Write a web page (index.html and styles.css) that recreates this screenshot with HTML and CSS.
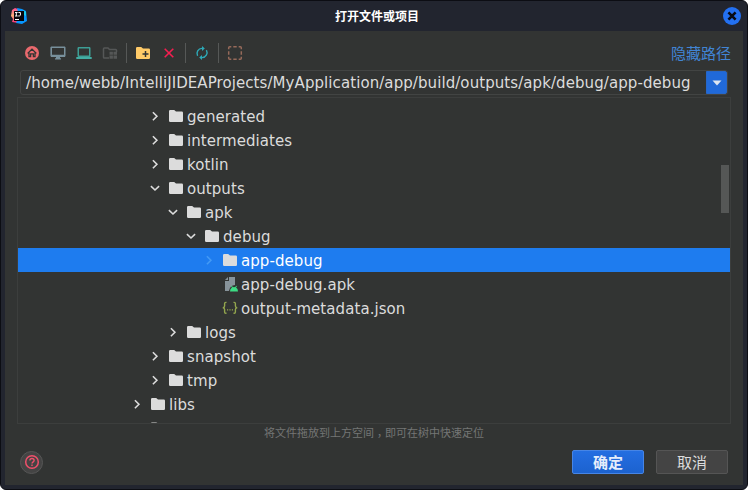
FILE: index.html
```html
<!DOCTYPE html>
<html lang="zh-CN">
<head>
<meta charset="utf-8">
<title>打开文件或项目</title>
<link rel="stylesheet" href="styles.css">
</head>
<body>
<svg class="defs" aria-hidden="true">
  <symbol id="folder" viewBox="0 0 16 16"><path d="M1 3.2Q1 2 2.2 2H6.2L8 3.5H13.8Q15 3.5 15 4.7V12.8Q15 14 13.8 14H2.2Q1 14 1 12.8Z" fill="currentColor"/></symbol>
  <symbol id="right" viewBox="0 0 16 16"><path d="M5.9 4.2L9.9 8.2L5.9 12.2" fill="none" stroke="currentColor" stroke-width="1.6"/></symbol>
  <symbol id="down" viewBox="0 0 16 16"><path d="M3.9 6.1L8 10L12.1 6.1" fill="none" stroke="currentColor" stroke-width="1.6"/></symbol>
</svg>
<div class="window">
  <header class="titlebar">
    <svg class="logo" viewBox="0 0 16 16">
      <defs><linearGradient id="warm" x2="0" y2="1"><stop stop-color="#f44a91"/><stop offset=".5" stop-color="#ffb07a"/><stop offset="1" stop-color="#f52577"/></linearGradient></defs>
      <path d="M1 2L4 0L7 1V15L1 14L2 11L0 8Z" fill="url(#warm)"/>
      <path d="M6 0L11 1L15 3L16 13L11 16L5 15L8 8Z" fill="#0795ff"/>
      <path d="M12 2L15 4V8L13 7Z" fill="#19cbe9"/>
      <path d="M3 3H13V13H3Z" fill="#07060b"/>
      <path d="M4 4.5H6.6M5.3 4.5V8M4 8H6.6M7.4 4.5H9.4V7.3Q9.4 8 7.2 8M4 11.5H8" fill="none" stroke="#fff"/>
    </svg>
    <h1>打开文件或项目</h1>
    <svg class="close" viewBox="0 0 18 18"><circle cx="9" cy="9" r="9" fill="#2370f1"/><path d="M5.4 5.4L12.6 12.6M12.6 5.4L5.4 12.6" stroke="#080c18" stroke-width="2.6"/></svg>
  </header>
  <main class="content">
    <div class="toolbar">
      <svg viewBox="0 0 16 16"><circle cx="8" cy="8" r="7" fill="#e9696d"/><path d="M3.6 8.4L8 4.2L12.4 8.4M5 7.6V11.7H6.6V8.8H9.4V11.7H11V7.6" fill="none" stroke="#323433" stroke-width="1.3"/></svg>
      <svg viewBox="0 0 16 16"><path d="M1.2 1.5H14.8L15.5 2.2V11L14.8 12H10V13.2H11V14.6H5V13.2H6V12H1.2L.4 11V2.2ZM2 3V9.8H14V3Z" fill="#78909c" fill-rule="evenodd"/></svg>
      <svg viewBox="0 0 16 16"><path d="M2.3 2H13.7L14.5 2.8V11.2L13.7 12H2.3L1.5 11.2V2.8ZM3 3.4V10.5H13V3.4Z" fill="#3d9e95" fill-rule="evenodd"/><path d="M.3 12H15.7V14H.3Z" fill="#42ada3"/></svg>
      <svg viewBox="0 0 16 16" class="disabled"><path d="M7 13H2.3Q1.5 13 1.5 12.2V3.8Q1.5 3 2.3 3H6L7.5 4.5H13.7Q14.5 4.5 14.5 5.3V7" fill="none" stroke="currentColor" stroke-width="1.5"/><path d="M7.5 6.8H10.9V9.8H7.5ZM11.5 6.8H15V9.8H11.5ZM7.5 10.4H10.9V13.7H7.5ZM11.5 10.4H15V13.7H11.5Z" fill="currentColor"/></svg>
      <i></i>
      <svg viewBox="0 0 16 16" class="new"><use href="#folder"/><path d="M10.5 6V12M7.5 9H13.5" stroke="#323433" stroke-width="1.5"/></svg>
      <svg viewBox="0 0 16 16"><path d="M3.7 3.7L12.3 12.3M12.3 3.7L3.7 12.3" stroke="#f51e50" stroke-width="1.6"/></svg>
      <i></i>
      <svg viewBox="0 0 16 16"><path d="M3.6 10.8A5 5 0 0 1 8 3.4H9M12.4 5.2A5 5 0 0 1 8 12.6H7" fill="none" stroke="#2da9b7" stroke-width="1.4"/><path d="M8 .9L10.8 3.4L8 5.9ZM8 10.1L5.2 12.6L8 15.1Z" fill="#2da9b7"/></svg>
      <i></i>
      <svg viewBox="0 0 16 16"><path d="M1.7 4.3V2.7Q1.7 1.7 2.7 1.7H4.3M6.3 1.7H9.7M11.7 1.7H13.3Q14.3 1.7 14.3 2.7V4.3M14.3 6.3V9.7M14.3 11.7V13.3Q14.3 14.3 13.3 14.3H11.7M9.7 14.3H6.3M4.3 14.3H2.7Q1.7 14.3 1.7 13.3V11.7M1.7 9.7V6.3" fill="none" stroke="#966a5a" stroke-width="1.5"/></svg>
      <a class="hide-path">隐藏路径</a>
    </div>
    <div class="path">
      <span>/home/webb/IntelliJIDEAProjects/MyApplication/app/build/outputs/apk/debug/app-debug</span>
      <button class="history"><svg viewBox="0 0 10 6"><path d="M.5 .5H9.5L5 5.5Z" fill="#dce5f1"/></svg></button>
    </div>
    <div class="tree">
      <div class="row l1"><svg class="arrow"><use href="#right"/></svg><svg><use href="#folder"/></svg><span>generated</span></div>
      <div class="row l1"><svg class="arrow"><use href="#right"/></svg><svg><use href="#folder"/></svg><span>intermediates</span></div>
      <div class="row l1"><svg class="arrow"><use href="#right"/></svg><svg><use href="#folder"/></svg><span>kotlin</span></div>
      <div class="row l1"><svg class="arrow"><use href="#down"/></svg><svg><use href="#folder"/></svg><span>outputs</span></div>
      <div class="row l2"><svg class="arrow"><use href="#down"/></svg><svg><use href="#folder"/></svg><span>apk</span></div>
      <div class="row l3"><svg class="arrow"><use href="#down"/></svg><svg><use href="#folder"/></svg><span>debug</span></div>
      <div class="row l4 selected"><svg class="arrow"><use href="#right"/></svg><svg><use href="#folder"/></svg><span>app-debug</span></div>
      <div class="row l4"><svg class="arrow"></svg><svg viewBox="0 0 16 16"><path d="M7 1H13V9Q8 9 7 15H3V5H7Z" fill="#87939a"/><path d="M6 1V4H3Z" fill="#87939a"/><path d="M8 15.6Q8 12.8 10 11.6L9 10.3L9.8 9.8L10.9 11.2Q12 10.8 13.1 11.2L14.2 9.8L15 10.3L14 11.6Q16 12.8 16 15.6Z" fill="#3ddc84"/></svg><span>app-debug.apk</span></div>
      <div class="row l4"><svg class="arrow"></svg><svg viewBox="0 0 16 16"><path d="M4.5 2.4H3.8Q2.6 2.4 2.6 3.6V6Q2.6 7.6 .8 7.8Q2.6 8 2.6 9.6V12Q2.6 13.2 3.8 13.2H4.5M11.5 2.4H12.2Q13.4 2.4 13.4 3.6V6Q13.4 7.6 15.2 7.8Q13.4 8 13.4 9.6V12Q13.4 13.2 12.2 13.2H11.5" fill="none" stroke="#93a64e" stroke-width="1.4"/><path d="M5 9.3H6.2V10.5H5ZM7.4 9.3H8.6V10.5H7.4ZM9.8 9.3H11V10.5H9.8Z" fill="#93a64e"/></svg><span>output-metadata.json</span></div>
      <div class="row l2"><svg class="arrow"><use href="#right"/></svg><svg><use href="#folder"/></svg><span>logs</span></div>
      <div class="row l1"><svg class="arrow"><use href="#right"/></svg><svg><use href="#folder"/></svg><span>snapshot</span></div>
      <div class="row l1"><svg class="arrow"><use href="#right"/></svg><svg><use href="#folder"/></svg><span>tmp</span></div>
      <div class="row l0"><svg class="arrow"><use href="#right"/></svg><svg><use href="#folder"/></svg><span>libs</span></div>
      <div class="row l0 clipped"><svg class="arrow"></svg><svg><use href="#folder"/></svg></div>
      <div class="scrollbar"></div>
    </div>
    <p class="hint">将文件拖放到上方空间<span class="comma" lang="zh-TW">，</span>即可在树中快速定位</p>
    <footer class="actions">
      <button class="help"><svg viewBox="0 0 16 16"><circle cx="8" cy="8" r="6.3" fill="none" stroke="#ef506b" stroke-width="1.5"/><path d="M5.9 6.5Q5.9 4.5 8 4.5T10.1 6.4C10.1 7.8 8 7.9 8 9.6M8 10.6V12" fill="none" stroke="#ef506b" stroke-width="1.4"/></svg></button>
      <button class="btn primary">确定</button>
      <button class="btn">取消</button>
    </footer>
  </main>
</div>
</body>
</html>
```

FILE: styles.css
```css
* { box-sizing: border-box; }
body {
  margin: 0;
  background: #fff;
  color: #dcdcdc;
  font: 15px "DejaVu Sans", "Noto Sans CJK SC", sans-serif;
}
svg { display: block; flex: none; }
button { font: inherit; padding: 0; }
.defs { position: absolute; width: 0; height: 0; }

.window {
  width: 748px;
  height: 490px;
  padding: 0 4px 4px;
  border: 1px solid #0c0d13;
  border-radius: 6px;
  background: #22252f;
  overflow: hidden;
}
.titlebar {
  height: 30px;
  display: flex;
  align-items: center;
  justify-content: space-between;
  padding: 0 2px 0 6px;
}
.logo { width: 16px; height: 16px; }
.titlebar h1 {
  margin: 0;
  padding-left: 4px;
  color: #fff;
  font: bold 12px/18px "Noto Sans CJK SC", sans-serif;
}
.close { width: 18px; height: 18px; }

.content {
  height: 454px;
  padding: 9px 12px 0;
  background: #323433;
  overflow: hidden;
}
.toolbar {
  height: 26px;
  padding: 0 0 0 7px;
  display: flex;
  align-items: center;
}
.toolbar svg { width: 16px; height: 16px; margin-right: 10px; }
.toolbar i { width: 1px; height: 20px; margin: 0 8px 0 -2px; background: #565857; }
.toolbar .disabled { color: #555757; }
.toolbar .new { color: #ffca68; }
.hide-path {
  margin-left: auto;
  color: #4184d3;
  font: 15px/22px "Noto Sans CJK SC", sans-serif;
}
.path {
  height: 25px;
  margin: 4px 3px 0;
  padding-left: 5px;
  display: flex;
  align-items: center;
  justify-content: space-between;
  border: 1px solid #424443;
  border-radius: 3px;
  white-space: nowrap;
}
.path span { letter-spacing: 0.078px; }
.history {
  width: 21px;
  height: 23px;
  display: flex;
  align-items: center;
  justify-content: center;
  border: 1px solid #2767c8;
  border-radius: 0 2px 2px 0;
  background: #2069d9;
}
.history svg { width: 10px; height: 6px; }

.tree {
  position: relative;
  height: 327px;
  margin-top: 2px;
  padding-top: 6px;
  border: 1px solid #3c3e3d;
  overflow: hidden;
}
.row { height: 24px; display: flex; align-items: center; }
.row svg { width: 16px; height: 16px; margin-right: 3px; }
.row svg.arrow { margin-right: 5px; }
.row span { padding-top: 2px; letter-spacing: 0.07px; }
.l0 { padding-left: 111px; }
.l1 { padding-left: 129px; }
.l2 { padding-left: 147px; }
.l3 { padding-left: 165px; }
.l4 { padding-left: 183px; }
.clipped { color: #858685; }
.selected { background: #1e7cef; color: #fff; }
.selected svg { color: #dcdcdc; }
.selected .arrow { color: #439af5; }
.scrollbar {
  position: absolute;
  top: 67px;
  right: 1px;
  width: 8px;
  height: 48px;
  background: #555756;
}
.hint {
  margin: 0;
  height: 17px;
  text-align: center;
  color: #747675;
  font: 11px/17px "Noto Sans CJK SC", sans-serif;
}
.comma {
  display: inline-block;
  line-height: 1;
  font-family: "Noto Sans CJK TC", sans-serif;
  transform: translateY(3px);
}
.actions {
  display: flex;
  align-items: center;
  gap: 12px;
  margin: 9px 3px 0 3px;
}
.help {
  width: 23px;
  height: 23px;
  margin-right: auto;
  display: flex;
  align-items: center;
  justify-content: center;
  border: 1px solid #565656;
  border-radius: 50%;
  background: #444;
}
.help svg { width: 16px; height: 16px; }
.btn {
  width: 72px;
  height: 24px;
  border: 1px solid #555;
  border-radius: 2px;
  background: #444;
  color: #dcdcdc;
  font: 15px/20px "Noto Sans CJK SC", sans-serif;
}
.primary {
  border-color: #4785e5;
  background: linear-gradient(#246ee1, #1c62cf);
  color: #e4edfb;
  font-weight: bold;
}
```
